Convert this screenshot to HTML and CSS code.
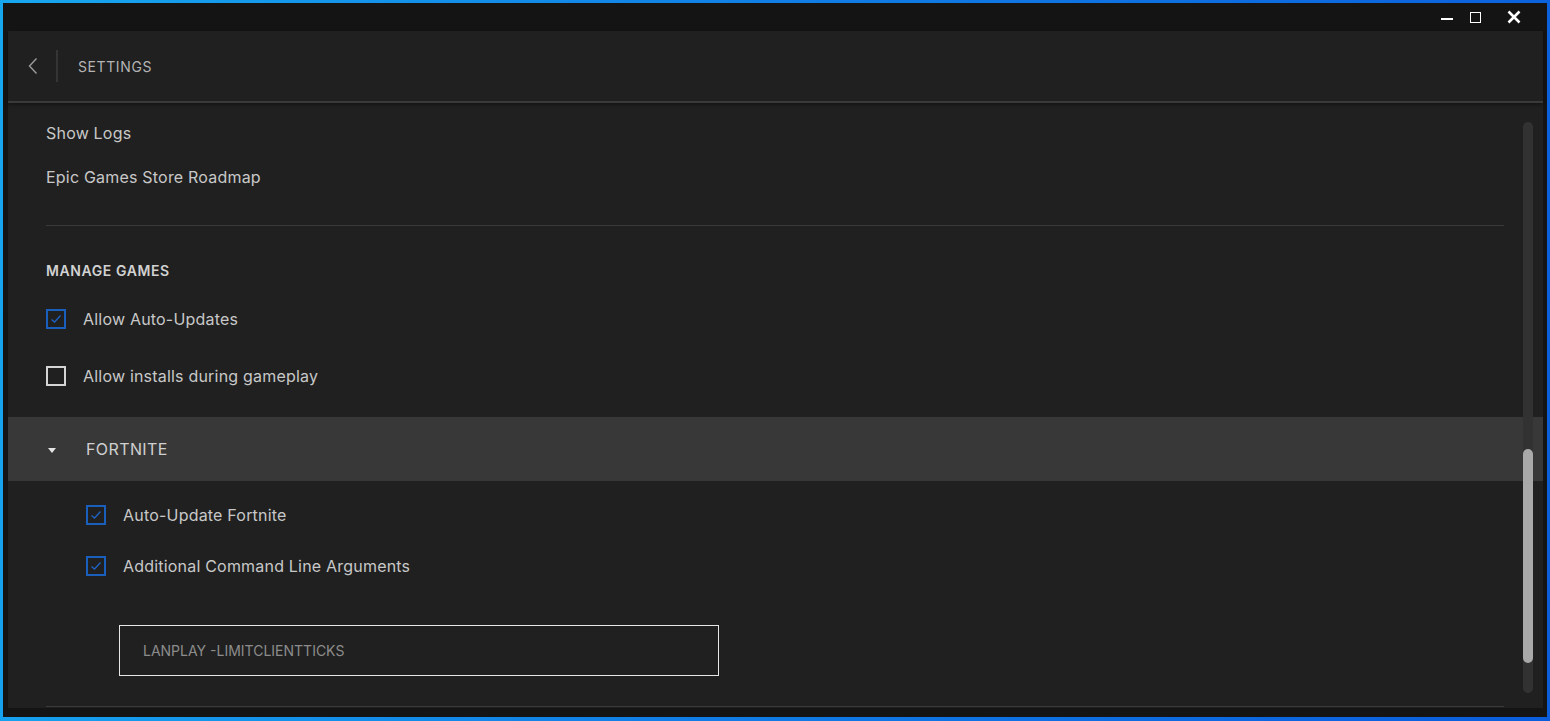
FILE: index.html
```html
<!DOCTYPE html>
<html lang="en">
<head>
<meta charset="UTF-8">
<meta name="viewport" content="width=device-width, initial-scale=1.0">
<title>Settings</title>
<link rel="stylesheet" href="styles.css">
</head>
<body>
<div class="window">
  <div class="titlebar">
    <span class="win-btn win-min"></span>
    <span class="win-btn win-max"></span>
    <svg class="win-btn win-close" width="14" height="14" viewBox="0 0 14 14">
      <path d="M1.5 1.5 L12.5 12.5 M12.5 1.5 L1.5 12.5" stroke="#fff" stroke-width="2.6" fill="none"/>
    </svg>
  </div>

  <div class="panel">
    <div class="header">
      <svg class="back" width="10" height="18" viewBox="0 0 10 18">
        <path d="M8.5 1.5 L1.5 9 L8.5 16.5" stroke="#9a9a9a" stroke-width="1.4" fill="none"/>
      </svg>
      <span class="header-sep"></span>
      <span class="header-title">Settings</span>
    </div>

    <div class="content">
      <div class="link-row">Show Logs</div>
      <div class="link-row">Epic Games Store Roadmap</div>

      <div class="divider"></div>

      <div class="section-title">Manage Games</div>

      <div class="check-row row-auto">
        <span class="checkbox checked"><svg width="12" height="10" viewBox="0 0 12 10"><path d="M1.5 5.5 L4.5 8 L10.5 1.5" stroke="#1e63c4" stroke-width="1.3" fill="none"/></svg></span>
        <span class="check-label">Allow Auto-Updates</span>
      </div>
      <div class="check-row row-installs">
        <span class="checkbox"></span>
        <span class="check-label">Allow installs during gameplay</span>
      </div>

      <div class="game-row">
        <span class="caret"></span>
        <span class="game-name">Fortnite</span>
      </div>

      <div class="game-options">
        <div class="check-row row-game1">
          <span class="checkbox checked"><svg width="12" height="10" viewBox="0 0 12 10"><path d="M1.5 5.5 L4.5 8 L10.5 1.5" stroke="#1e63c4" stroke-width="1.3" fill="none"/></svg></span>
          <span class="check-label">Auto-Update Fortnite</span>
        </div>
        <div class="check-row row-game2">
          <span class="checkbox checked"><svg width="12" height="10" viewBox="0 0 12 10"><path d="M1.5 5.5 L4.5 8 L10.5 1.5" stroke="#1e63c4" stroke-width="1.3" fill="none"/></svg></span>
          <span class="check-label">Additional Command Line Arguments</span>
        </div>
        <div class="args-input">LANPLAY -LIMITCLIENTTICKS</div>
      </div>

      <div class="divider divider-bottom"></div>

      <div class="scroll-track"><div class="scroll-thumb"></div></div>
    </div>
  </div>
</div>
</body>
</html>
```

FILE: styles.css
```css
html, body {
  margin: 0;
  padding: 0;
  height: 100%;
}

body {
  font-family: Inter, "Noto Sans", sans-serif;
  background: linear-gradient(100deg, #17a7ef 0%, #1180e6 45%, #0b5ddc 100%);
  padding: 3px 3px 4px 3px;
  box-sizing: border-box;
  overflow: hidden;
}

.window {
  height: 100%;
  background-color: #141414;
  display: flex;
  flex-direction: column;
  padding: 0 4px 9px 5px;
  box-sizing: border-box;
}

.titlebar {
  height: 28px;
  flex-shrink: 0;
  display: flex;
  align-items: center;
  justify-content: flex-end;
  padding-right: 22px;
}

.win-btn {
  display: block;
  margin-left: 17px;
}

.win-min {
  width: 12px;
  height: 2px;
  background-color: #fff;
  margin-top: 4px;
}

.win-max {
  width: 9px;
  height: 9px;
  border: 1.5px solid #fff;
}

.win-close {
  margin-left: 26px;
}

.panel {
  flex: 1;
  background-color: #202020;
  display: flex;
  flex-direction: column;
  min-height: 0;
}

.header {
  height: 70px;
  flex-shrink: 0;
  display: flex;
  align-items: center;
  border-bottom: 2px solid #3a3a3a;
  box-shadow: 0 2px 3px rgba(0, 0, 0, 0.35);
  position: relative;
  z-index: 1;
}

.back {
  margin-left: 20px;
}

.header-sep {
  width: 2px;
  height: 32px;
  background-color: #353535;
  margin-left: 18px;
}

.header-title {
  margin-left: 20px;
  font-size: 14px;
  text-transform: uppercase;
  letter-spacing: 0.6px;
  color: #b4b4b4;
}

.content {
  flex: 1;
  position: relative;
  overflow: hidden;
  padding-top: 8px;
  letter-spacing: 0.2px;
}

.link-row {
  height: 44px;
  line-height: 44px;
  padding-left: 38px;
  font-size: 16px;
  color: #c8c8c8;
}

.divider {
  height: 1px;
  background-color: #3a3a3a;
  margin: 26px 39px 0 38px;
}

.section-title {
  margin-top: 33px;
  padding-left: 38px;
  height: 24px;
  line-height: 24px;
  font-size: 14px;
  font-weight: 600;
  letter-spacing: 0.6px;
  text-transform: uppercase;
  color: #d2d2d2;
}

.check-row {
  display: flex;
  align-items: center;
  height: 40px;
  padding-left: 38px;
}

.row-auto {
  margin-top: 16px;
}

.row-installs {
  margin-top: 17px;
}

.checkbox {
  width: 16px;
  height: 16px;
  border: 2px solid #d4d4d4;
  display: flex;
  align-items: center;
  justify-content: center;
  flex-shrink: 0;
}

.checkbox.checked {
  border-color: #1b5fbd;
}

.check-label {
  margin-left: 17px;
  font-size: 16px;
  color: #c8c8c8;
}

.game-row {
  margin-top: 21px;
  height: 64px;
  background-color: #383838;
  display: flex;
  align-items: center;
}

.caret {
  width: 0;
  height: 0;
  border-left: 4px solid transparent;
  border-right: 4px solid transparent;
  border-top: 5px solid #e4e4e4;
  margin-left: 40px;
  margin-top: 2px;
}

.game-name {
  margin-left: 30px;
  font-size: 16px;
  text-transform: uppercase;
  letter-spacing: 0.4px;
  color: #d0d0d0;
}

.game-options {
  padding-left: 40px;
}

.row-game1 {
  margin-top: 14px;
}

.row-game2 {
  margin-top: 11px;
}

.args-input {
  margin: 39px 0 0 71px;
  width: 575px;
  height: 49px;
  border: 1px solid #e6e6e6;
  display: flex;
  align-items: center;
  padding-left: 23px;
  font-size: 14px;
  letter-spacing: 0;
  color: #8c8c8c;
}

.divider-bottom {
  margin-top: 30px;
}

.scroll-track {
  position: absolute;
  left: 1515px;
  top: 19px;
  width: 10px;
  height: 571px;
  border-radius: 5px;
  background-color: #323232;
}

.scroll-thumb {
  position: absolute;
  left: 0;
  top: 327px;
  width: 10px;
  height: 214px;
  border-radius: 5px;
  background-color: #a9a9a9;
}
```
